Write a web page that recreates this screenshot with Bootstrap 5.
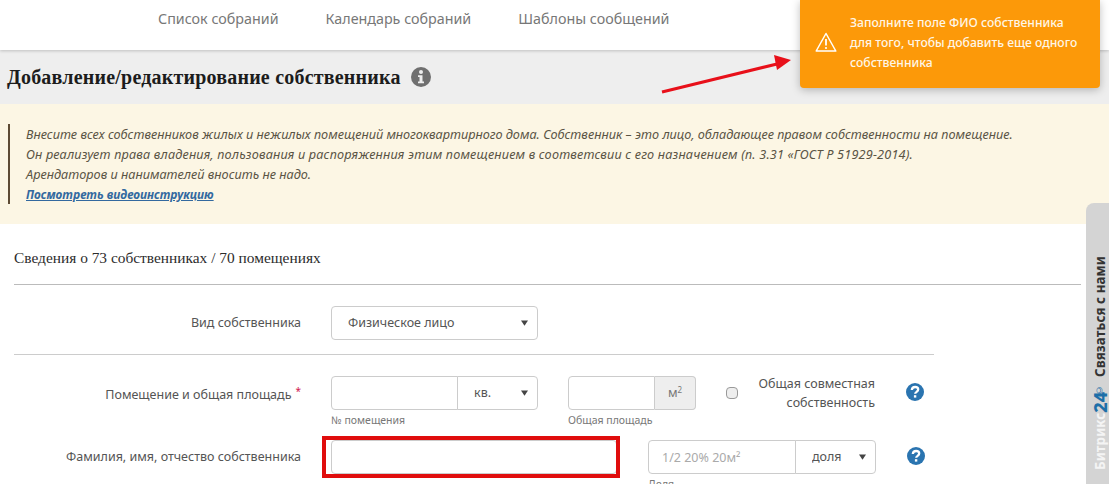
<!DOCTYPE html>
<html lang="ru"><head><meta charset="utf-8"><title>Собственник</title>
<link href="https://cdn.jsdelivr.net/npm/bootstrap@5.3.0/dist/css/bootstrap.min.css" rel="stylesheet">
<style>
html,body{height:484px;overflow:hidden}
body{position:relative;font-family:"Noto Sans","Liberation Sans",sans-serif;color:#555;background:#fff}
.topnav{height:50px;box-shadow:0 1px 3px rgba(0,0,0,.2);position:relative;gap:47px;padding:0 0 13px 158px;background:#fff}
.topnav a{color:#777;text-decoration:none;font-size:14.3px}
.titlebar{height:54px;background:#eee;padding-left:7px;gap:10px}
.titlebar h1{font:bold 20px "Liberation Serif","DejaVu Serif",serif;color:#1c1c1c;margin:0;letter-spacing:.2px}
.notebar{height:120px;background:#fcf6e4;padding:20px 8px 0}
.noteinner{border-left:2px solid #5d4a33;padding-left:16px;font-style:italic;font-size:12.7px;line-height:20px;color:#5a5444;height:80px}
.noteinner a{color:#33699f;font-weight:700;font-size:11.9px}
.spaced{letter-spacing:.17px}
.formarea{padding:0 28px 0 14px}
.summary{font:15.4px/1 "Liberation Serif",serif;color:#2c2c2c;padding-top:26px;height:61px;border-bottom:1px solid #bbb}
.kindrow{height:70px;width:920px;border-bottom:1px solid #ccc;padding-top:21px}
.lbl{width:287px;text-align:right;font-size:12.5px;color:#555;flex:none}
.ctl{margin-left:30px}
.fld{height:34px;border:1px solid #ccc;border-radius:4px;font-size:12.5px;color:#555;box-shadow:none}
.form-select.fld{padding:0 22px 0 16px;background-size:7px 6px;background-position:right 9px center;background-image:url("data:image/svg+xml,%3Csvg xmlns='http://www.w3.org/2000/svg' viewBox='0 0 8 6'%3E%3Cpath fill='%23444' d='M0 0h8L4 6z'/%3E%3C/svg%3E")}
.w207{width:207px}.w128{width:128px}.w228{width:228px}
.unitsel{width:81px;flex:0 0 81px}
.grp{display:flex}
.grp .form-control{border-radius:4px 0 0 4px;min-width:0}
.grp .form-select{border-radius:0 4px 4px 0;margin-left:-1px}
.form-control::placeholder{color:#aaa}
.frac{padding-left:13px}
.unit{width:41px;background:#eee;border:1px solid #ccc;border-left:0;border-radius:0 4px 4px 0;height:34px;font-size:12.5px;color:#777}
.unit sup{font-size:8px}
.hint{font-size:10.5px;color:#777;margin-top:3px;line-height:14px}
.arearow{padding-top:21px;height:85px}
.req{color:#d0174f;font-size:10px;vertical-align:4px;margin-left:4px;margin-right:0}
.chk{width:12px;height:12px;margin:0;border-color:#999;background:#eee;flex:none}
.chkwrap{width:149px;margin-left:30px;height:34px}
.chktxt{width:137px;text-align:right;font-size:12.5px;line-height:19px;color:#555}
.hlp{margin-left:31px;margin-top:7px;flex:none}
.fiorow{height:34px}
.redbox{position:relative;width:286px}
.redbox::after{content:"";position:absolute;left:-9px;right:-3px;top:-4px;bottom:-4px;border:4px solid #e00d0d;pointer-events:none}
.redbox .form-control{width:100%}
.ctl2{margin-left:31px}
.toastbox{position:absolute;left:800px;top:0;width:300px;height:88px;background:#fc9909;border-radius:0 0 4px 4px;box-shadow:0 2px 8px rgba(0,0,0,.25);color:#fff6e6;font-size:12.15px;line-height:20.4px;padding:12.5px 10px 0 50px;font-weight:500}
.toastbox svg{position:absolute;left:15px;top:32px}
.arrowmark{position:absolute;left:655px;top:55px}
.bxtab{position:absolute;left:1086px;top:203px;width:23px;height:281px;background:#d4d4d4;border-radius:8px 0 0 0;writing-mode:vertical-rl;overflow:hidden}
.bxtxt{transform:rotate(180deg);height:100%;font-size:13.3px;font-weight:700;color:#333;line-height:18px;white-space:nowrap;padding-top:14px;padding-right:5px;letter-spacing:.1px}
.bxtxt b{color:#f4f4f4;font-weight:700}.bxtxt i{color:#1d6fa8;font-style:normal;font-size:18px;line-height:18px;font-weight:800}.bxtxt sup{font-size:8px;line-height:0;color:#1d6fa8;font-weight:400;margin-right:3px}
</style></head>
<body>
<nav class="topnav d-flex align-items-center">
<a href="#">Список собраний</a><a href="#">Календарь собраний</a><a href="#">Шаблоны сообщений</a>
</nav>
<div class="titlebar d-flex align-items-center">
<h1>Добавление/редактирование собственника</h1>
<svg width="20" height="20" viewBox="0 0 20 20"><circle cx="10" cy="10" r="10" fill="#6f6f6f"/><circle cx="10" cy="5" r="2" fill="#eee"/><path fill="#eee" d="M7 8.2h4.5v6.3H13v1.8H7v-1.8h1.5V10H7z"/></svg>
</div>
<div class="notebar"><div class="noteinner">
Внесите всех собственников жилых и нежилых помещений многоквартирного дома. Собственник – это лицо, обладающее правом собственности на помещение.<br>
<span class="spaced">Он реализует права владения, пользования и распоряженния этим помещением в соответсвии с его назначением (п. 3.31 «ГОСТ Р 51929-2014).</span><br>
Арендаторов и нанимателей вносить не надо.<br>
<a href="#">Посмотреть видеоинструкцию</a>
</div></div>
<div class="formarea">
<div class="summary">Сведения о 73 собственниках / 70 помещениях</div>
<div class="kindrow d-flex align-items-start">
<div class="lbl pt-2">Вид собственника</div>
<div class="ctl"><select class="form-select fld w207"><option>Физическое лицо</option></select></div>
</div>
<div class="arearow d-flex align-items-start">
<div class="lbl pt-2">Помещение и общая площадь<span class="req">*</span></div>
<div class="ctl">
<div class="grp w207"><input class="form-control fld" type="text" aria-label="№ помещения"><select class="form-select fld unitsel" aria-label="тип"><option>кв.</option></select></div>
<div class="hint">№ помещения</div>
</div>
<div class="ctl">
<div class="grp w128"><input class="form-control fld" type="text" aria-label="Общая площадь"><div class="unit d-flex align-items-center justify-content-center flex-shrink-0"><span>м<sup>2</sup></span></div></div>
<div class="hint">Общая площадь</div>
</div>
<div class="chkwrap d-flex align-items-center">
<input class="form-check-input chk" type="checkbox" aria-label="Общая">
<div class="chktxt">Общая совместная собственность</div>
</div>
<svg class="hlp" width="18" height="18" viewBox="0 0 18 18"><circle cx="9" cy="9" r="9" fill="#2a74b0"/><path d="M5.8 7c.2-2 1.6-3 3.3-3s3.1 1 3.1 2.6c0 2.3-3 2.2-3 4.2" fill="none" stroke="#fff" stroke-width="2.3"/><rect x="7.9" y="12.2" width="2.4" height="2.4" fill="#fff"/></svg>
</div>
<div class="fiorow d-flex align-items-start">
<div class="lbl pt-2">Фамилия, имя, отчество собственника</div>
<div class="ctl redbox"><input class="form-control fld" type="text" aria-label="ФИО"></div>
<div class="ctl2">
<div class="grp w228"><input class="form-control fld frac" type="text" placeholder="1/2 20% 20м²" aria-label="Доля"><select class="form-select fld unitsel" aria-label="тип доли"><option>доля</option></select></div>
<div class="hint">Доля</div>
</div>
<svg class="hlp" width="18" height="18" viewBox="0 0 18 18"><circle cx="9" cy="9" r="9" fill="#2a74b0"/><path d="M5.8 7c.2-2 1.6-3 3.3-3s3.1 1 3.1 2.6c0 2.3-3 2.2-3 4.2" fill="none" stroke="#fff" stroke-width="2.3"/><rect x="7.9" y="12.2" width="2.4" height="2.4" fill="#fff"/></svg>
</div>
</div>
<svg class="arrowmark" width="140" height="42" viewBox="0 0 140 42"><path d="M7 37L122 9" stroke="#e8101a" stroke-width="3"/><path d="M136 5L119 0l3 15z" fill="#e8101a"/></svg>
<div class="toastbox">
<svg width="22" height="20" viewBox="0 0 22 20"><path d="M11 1.5L20.8 19H1.2z" fill="none" stroke="#fff" stroke-width="1.5" stroke-linejoin="round"/><path d="M11 7v6.5" stroke="#fff" stroke-width="1.8"/><circle cx="11" cy="16" r="1.1" fill="#fff"/></svg>
Заполните поле ФИО собственника<br>для того, чтобы добавить еще одного<br>собственника
</div>
<div class="bxtab"><div class="bxtxt"><b>Битрикс</b><i>24</i><sup>©</sup> Связаться с нами</div></div>
<script src="https://cdn.jsdelivr.net/npm/bootstrap@5.3.0/dist/js/bootstrap.bundle.min.js"></script>
</body></html>
